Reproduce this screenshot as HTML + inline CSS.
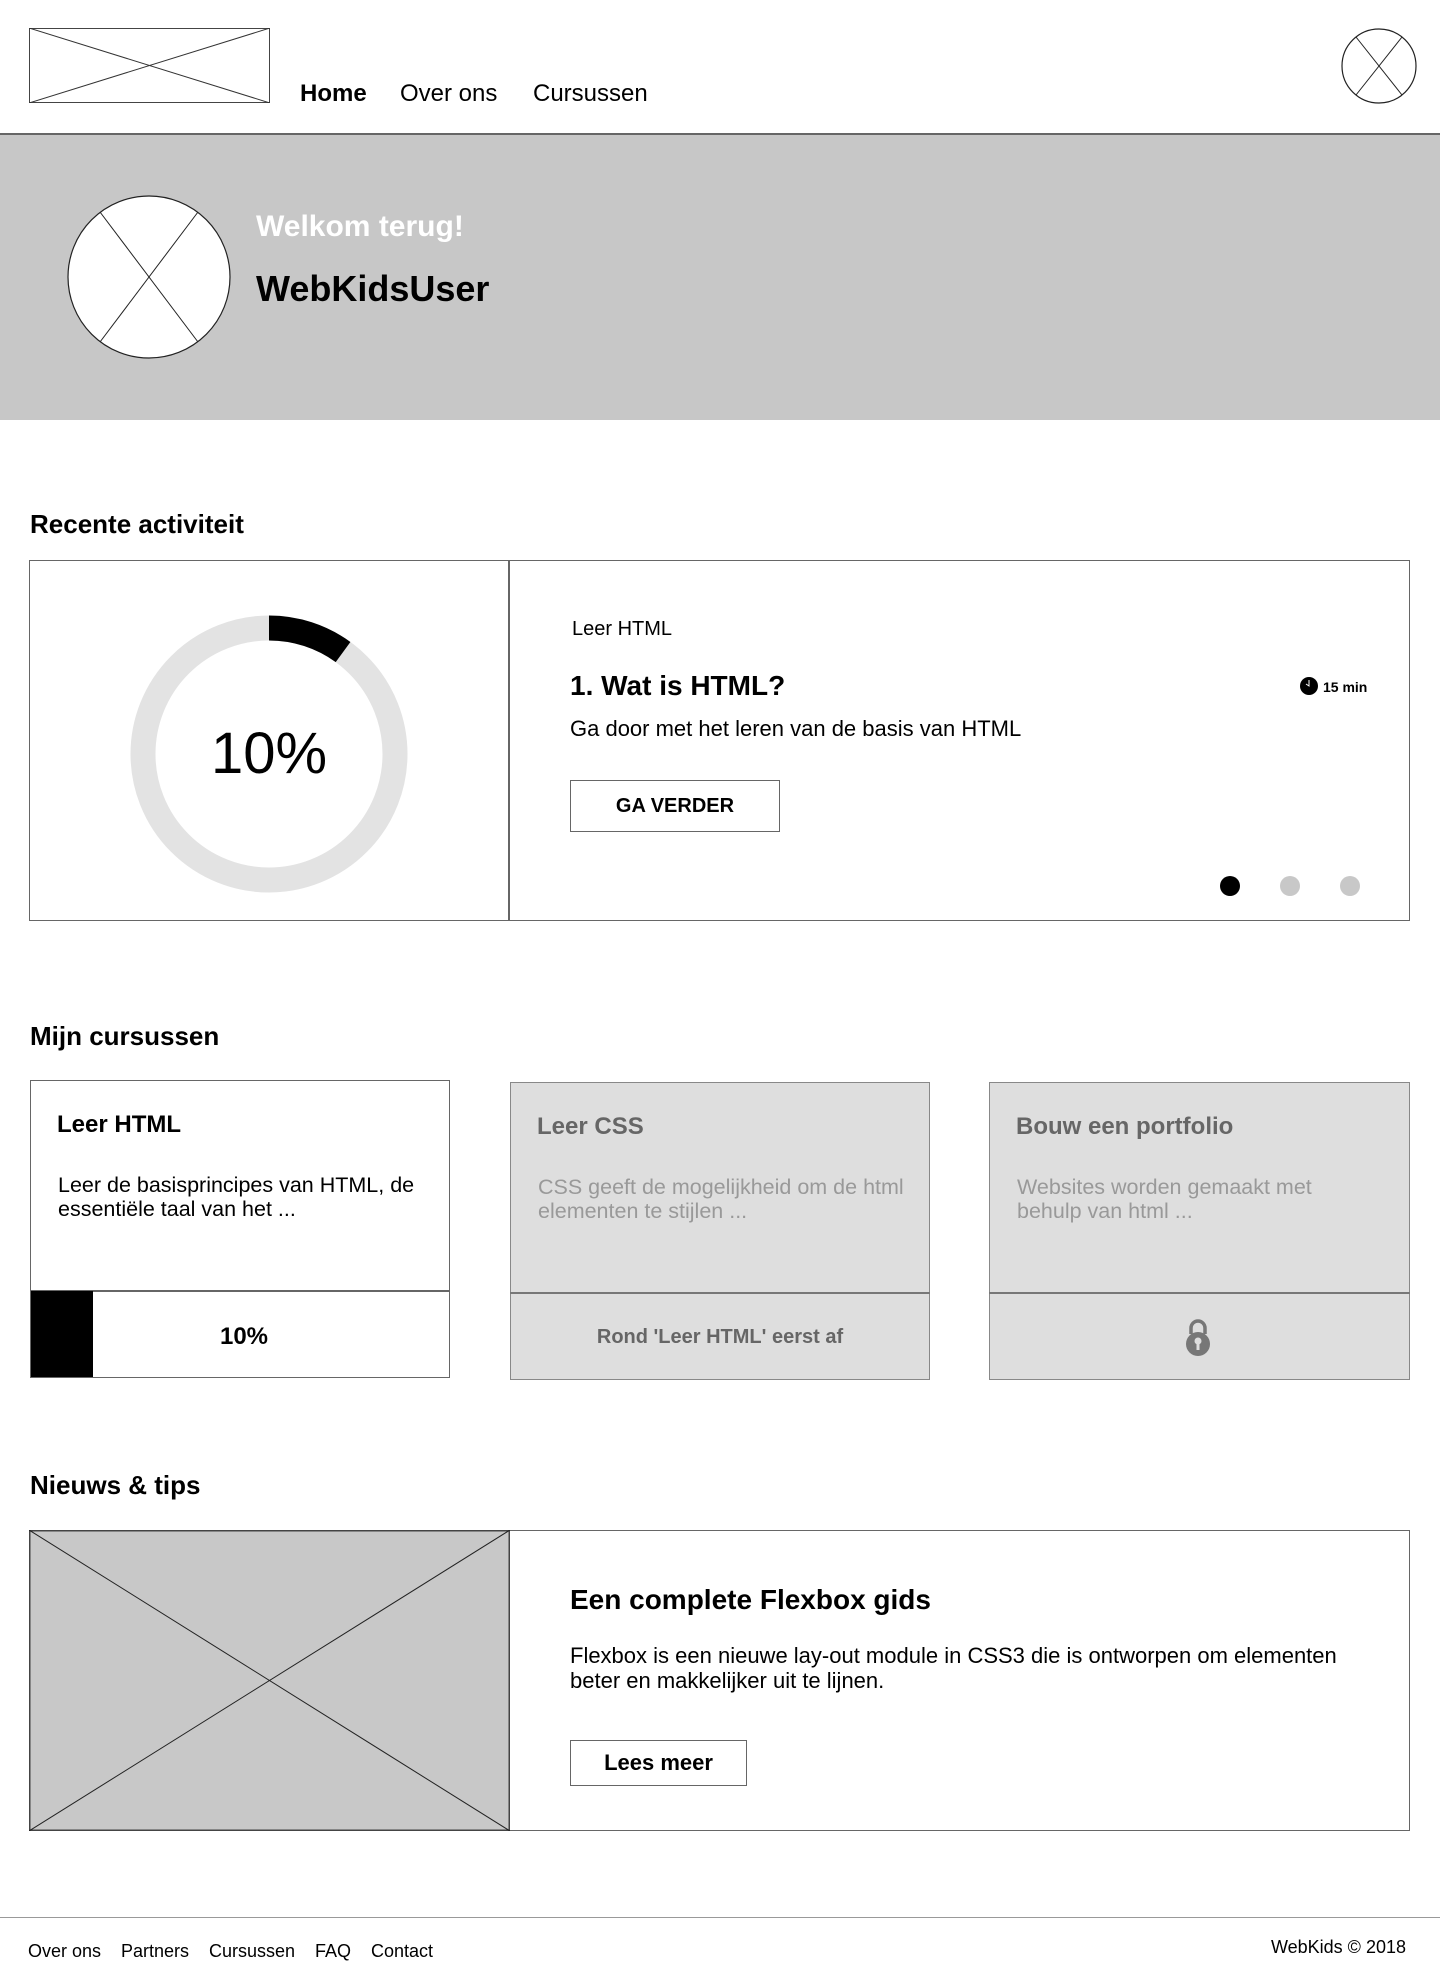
<!DOCTYPE html>
<html><head><meta charset="utf-8"><style>
*{margin:0;padding:0;box-sizing:border-box}
body{width:1440px;height:1980px;position:relative;background:#fff;font-family:"Liberation Sans",Arial,sans-serif;color:#000;overflow:hidden}
.a{position:absolute;line-height:1;white-space:nowrap}
.b{font-weight:bold}
.box{position:absolute;border:1.5px solid #666}
</style></head><body>
<!-- header -->
<svg class="a" style="left:29px;top:28px" width="241" height="75"><rect x="0.5" y="0.5" width="240" height="74" fill="#fff" stroke="#444"/><line x1="0" y1="0" x2="241" y2="75" stroke="#333"/><line x1="241" y1="0" x2="0" y2="75" stroke="#333"/></svg>
<div class="a b" style="left:300px;top:82px;font-size:24px">Home</div>
<div class="a" style="left:400px;top:82px;font-size:24px">Over ons</div>
<div class="a" style="left:533px;top:82px;font-size:24px">Cursussen</div>
<svg class="a" style="left:1341px;top:28px" width="76" height="76"><circle cx="38" cy="38" r="37" fill="#fff" stroke="#222" stroke-width="1.2"/><line x1="15" y1="9" x2="61" y2="67" stroke="#222"/><line x1="61" y1="9" x2="15" y2="67" stroke="#222"/></svg>
<div class="a" style="left:0;top:133px;width:1440px;height:287px;background:#c7c7c7;border-top:2px solid #666"></div>
<svg class="a" style="left:67px;top:195px" width="164" height="164"><circle cx="82" cy="82" r="81" fill="#fff" stroke="#222" stroke-width="1.2"/><line x1="33" y1="17" x2="131" y2="147" stroke="#222"/><line x1="131" y1="17" x2="33" y2="147" stroke="#222"/></svg>
<div class="a b" style="left:256px;top:212px;font-size:30px;color:#fff">Welkom terug!</div>
<div class="a b" style="left:256px;top:271px;font-size:36px">WebKidsUser</div>

<!-- recente activiteit -->
<div class="a b" style="left:30px;top:511px;font-size:26px">Recente activiteit</div>
<div class="box" style="left:29px;top:560px;width:1381px;height:361px"></div>
<div class="a" style="left:508px;top:560px;width:1.5px;height:361px;background:#666"></div>
<svg class="a" style="left:129px;top:614px" width="280" height="280">
<circle cx="140" cy="140" r="126" fill="none" stroke="#e3e3e3" stroke-width="25"/>
<path d="M140 14 A126 126 0 0 1 214.06 38.06" fill="none" stroke="#000" stroke-width="25"/>
</svg>
<div class="a" style="left:169px;top:725px;width:200px;text-align:center;font-size:58px">10%</div>
<div class="a" style="left:572px;top:619px;font-size:20px">Leer HTML</div>
<div class="a b" style="left:570px;top:672px;font-size:28px">1. Wat is HTML?</div>
<div class="a" style="left:570px;top:718px;font-size:22px">Ga door met het leren van de basis van HTML</div>
<div class="box" style="left:570px;top:780px;width:210px;height:52px;display:flex;align-items:center;justify-content:center;font-weight:bold;font-size:20px">GA VERDER</div>
<svg class="a" style="left:1299px;top:676px" width="20" height="20"><circle cx="10" cy="10" r="9" fill="#000"/><path d="M10 4 V10 L7 8" stroke="#fff" stroke-width="1" fill="none"/></svg>
<div class="a b" style="left:1323px;top:680px;font-size:14px">15 min</div>
<div class="a" style="left:1220px;top:876px;width:20px;height:20px;border-radius:50%;background:#000"></div>
<div class="a" style="left:1280px;top:876px;width:20px;height:20px;border-radius:50%;background:#c8c8c8"></div>
<div class="a" style="left:1340px;top:876px;width:20px;height:20px;border-radius:50%;background:#c8c8c8"></div>

<!-- cursussen -->
<div class="a b" style="left:30px;top:1023px;font-size:26px">Mijn cursussen</div>
<div class="box" style="left:30px;top:1080px;width:420px;height:298px;background:#fff"></div>
<div class="a" style="left:30px;top:1290px;width:420px;height:1.5px;background:#666"></div>
<div class="a" style="left:31px;top:1291px;width:62px;height:86px;background:#000"></div>
<div class="a b" style="left:57px;top:1113px;font-size:24px">Leer HTML</div>
<div class="a" style="left:58px;top:1173px;font-size:21.5px;line-height:24px;white-space:normal;width:385px">Leer de basisprincipes van HTML, de essentiële taal van het ...</div>
<div class="a b" style="left:144px;top:1325px;width:200px;text-align:center;font-size:24px">10%</div>

<div class="box" style="left:510px;top:1082px;width:420px;height:298px;background:#dedede;border-color:#888"></div>
<div class="a" style="left:510px;top:1292px;width:420px;height:1.5px;background:#777"></div>
<div class="a b" style="left:537px;top:1115px;font-size:24px;color:#666">Leer CSS</div>
<div class="a" style="left:538px;top:1175px;font-size:21.5px;line-height:24px;white-space:normal;width:385px;color:#999">CSS geeft de mogelijkheid om de html elementen te stijlen ...</div>
<div class="a b" style="left:510px;top:1327px;width:420px;text-align:center;font-size:20px;color:#666">Rond 'Leer HTML' eerst af</div>

<div class="box" style="left:989px;top:1082px;width:421px;height:298px;background:#dedede;border-color:#888"></div>
<div class="a" style="left:989px;top:1292px;width:421px;height:1.5px;background:#777"></div>
<div class="a b" style="left:1016px;top:1115px;font-size:24px;color:#666">Bouw een portfolio</div>
<div class="a" style="left:1017px;top:1175px;font-size:21.5px;line-height:24px;white-space:normal;width:330px;color:#999">Websites worden gemaakt met behulp van html ...</div>
<svg class="a" style="left:1183px;top:1318px" width="30" height="40"><path d="M8 16 V10 A7 7 0 0 1 22 10 V16" fill="none" stroke="#777" stroke-width="3.5"/><circle cx="15" cy="26" r="12" fill="#777"/><circle cx="15" cy="23" r="3.5" fill="#dedede"/><rect x="13.5" y="24" width="3" height="8" fill="#dedede"/></svg>

<!-- nieuws -->
<div class="a b" style="left:30px;top:1472px;font-size:26px">Nieuws &amp; tips</div>
<div class="box" style="left:29px;top:1530px;width:1381px;height:301px"></div>
<svg class="a" style="left:29px;top:1530px" width="481" height="301"><rect x="0.75" y="0.75" width="479.5" height="299.5" fill="#c8c8c8" stroke="#444" stroke-width="1.5"/><line x1="0" y1="0" x2="481" y2="301" stroke="#222"/><line x1="481" y1="0" x2="0" y2="301" stroke="#222"/></svg>
<div class="a b" style="left:570px;top:1586px;font-size:28px">Een complete Flexbox gids</div>
<div class="a" style="left:570px;top:1643px;font-size:22px;line-height:25px;white-space:normal;width:800px">Flexbox is een nieuwe lay-out module in CSS3 die is ontworpen om elementen beter en makkelijker uit te lijnen.</div>
<div class="box" style="left:570px;top:1740px;width:177px;height:46px;display:flex;align-items:center;justify-content:center;font-weight:bold;font-size:22px">Lees meer</div>

<!-- footer -->
<div class="a" style="left:0;top:1917px;width:1440px;height:1px;background:#999"></div>
<div class="a" style="left:28px;top:1942px;font-size:18px">Over ons</div>
<div class="a" style="left:121px;top:1942px;font-size:18px">Partners</div>
<div class="a" style="left:209px;top:1942px;font-size:18px">Cursussen</div>
<div class="a" style="left:315px;top:1942px;font-size:18px">FAQ</div>
<div class="a" style="left:371px;top:1942px;font-size:18px">Contact</div>
<div class="a" style="left:1206px;top:1938px;width:200px;text-align:right;font-size:18px">WebKids © 2018</div>
</body></html>
